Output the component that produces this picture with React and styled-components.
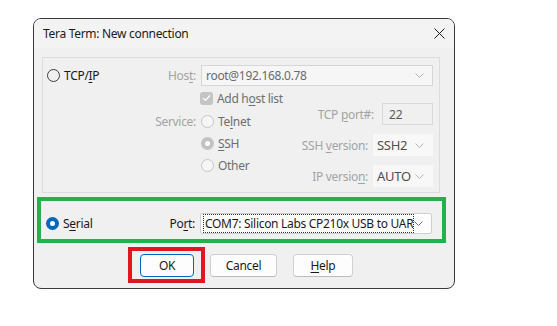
import React from "react";
import styled, { createGlobalStyle, css } from "styled-components";

const Global = createGlobalStyle`
  html, body { margin: 0; padding: 0; background: #ffffff; }
  body { font-family: "Noto Sans", "Open Sans", sans-serif; font-size: 12px; color: #1a1a1a; }
`;

const Page = styled.div`
  padding: 18px 0 0 33px;
`;

const Dialog = styled.div`
  box-sizing: border-box;
  width: 422px;
  height: 271px;
  border: 1px solid #3a3a3a;
  border-radius: 8px;
  background: #f0f0f0;
  display: flex;
  flex-direction: column;
  overflow: hidden;
`;

const TitleBar = styled.div`
  height: 29px;
  padding: 0 9px 0 9px;
  display: flex;
  align-items: center;
  justify-content: space-between;
  background: #f3f3f3;
`;

const Title = styled.span`
  font-size: 12px;
  color: #1a1a1a;
  letter-spacing: -0.3px;
`;

const Content = styled.div`
  padding: 9px 0 0 8px;
  display: flex;
  flex-direction: column;
`;

const GroupBox = styled.div`
  box-sizing: border-box;
  width: 398px;
  height: 136px;
  border: 1px solid #dcdcdc;
  padding: 7px 0 0 4px;
  display: grid;
  grid-template-columns: 100px 54px 232px;
  grid-template-rows: 21px 24px 22px 22px 22px 1fr;
`;

const SerialGroup = styled.div`
  position: relative;
  box-sizing: border-box;
  width: 398px;
  height: 40px;
  margin-top: 7px;
  padding: 13px 0 0 4px;
  display: grid;
  grid-template-columns: 100px 54px 232px;
  grid-template-rows: 21px;
  &::after {
    content: "";
    position: absolute;
    top: -3px;
    left: -5px;
    right: -6px;
    bottom: -3px;
    border: 4px solid #22b14c;
    pointer-events: none;
  }
`;

const Cell = styled.div`
  grid-column: ${(p) => p.$col};
  grid-row: ${(p) => p.$row};
  display: flex;
  align-items: center;
  justify-self: ${(p) => p.$justify || "start"};
  align-self: ${(p) => p.$align || "stretch"};
`;

const Label = styled.span`
  letter-spacing: -0.3px;
  color: ${(p) => (p.$disabled ? "#a3a3a3" : "#1a1a1a")};
  white-space: nowrap;
`;

const FieldLabel = styled(Label)`
  padding-right: ${(p) => p.$gap ?? 5}px;
`;

const Key = styled.u`
  text-decoration: underline;
  text-underline-offset: 2px;
  text-decoration-thickness: 1px;
`;

const Option = styled.label`
  display: flex;
  align-items: center;
  gap: 4px;
  white-space: nowrap;
  letter-spacing: -0.3px;
  color: ${(p) => (p.$disabled ? "#6e6e6e" : "#1a1a1a")};
`;

const RadioCircle = styled.span`
  box-sizing: border-box;
  width: 13px;
  height: 13px;
  border-radius: 50%;
  flex: none;
  display: flex;
  align-items: center;
  justify-content: center;
  ${(p) =>
    p.$checked
      ? css`
          background: ${p.$disabled ? "#c2c2c2" : "#0067c0"};
          border: none;
          &::after {
            content: "";
            width: 5px;
            height: 5px;
            border-radius: 50%;
            background: #ffffff;
          }
        `
      : css`
          background: ${p.$disabled ? "#f6f6f6" : "transparent"};
          border: 1px solid ${p.$disabled ? "#c6c6c6" : "#3d3d3d"};
        `}
`;

const CheckBox = styled.span`
  box-sizing: border-box;
  width: 13px;
  height: 13px;
  border-radius: 3px;
  background: #c4c4c4;
  flex: none;
  display: flex;
  align-items: center;
  justify-content: center;
  margin-left: -1px;
`;

const Combo = styled.div`
  box-sizing: border-box;
  width: ${(p) => p.$w}px;
  height: ${(p) => p.$h || 21}px;
  display: flex;
  align-items: center;
  justify-content: space-between;
  padding: 0 8px 0 ${(p) => p.$pl ?? 4}px;
  background: ${(p) => p.$bg};
  border: 1px solid ${(p) => p.$border};
  border-radius: ${(p) => p.$radius ?? 0}px;
  color: ${(p) => p.$color || "#5c5c5c"};
  font-size: ${(p) => p.$fs || 12}px;
  letter-spacing: -0.3px;
  overflow: hidden;
  white-space: nowrap;
`;

const InputBox = styled.div`
  box-sizing: border-box;
  width: 51px;
  height: 22px;
  border: 1px solid #d9d9d9;
  background: #f0f0f0;
  display: flex;
  align-items: center;
  padding-left: 6px;
  color: #5c5c5c;
  font-size: 12px;
`;

const FieldsColumn = styled.div`
  grid-column: 3;
  grid-row: 2 / 7;
  justify-self: end;
  align-self: start;
  padding-top: 17px;
  display: flex;
  flex-direction: column;
  align-items: flex-end;
  gap: 9px;
`;

const FieldRow = styled.div`
  height: 22px;
  display: flex;
  align-items: center;
`;

const FocusText = styled.span`
  box-sizing: border-box;
  width: 214px;
  height: 19px;
  border: 1px dotted #333;
  overflow: hidden;
  white-space: nowrap;
  display: flex;
  align-items: center;
  padding-left: 1px;
  color: #1a1a1a;
  margin-left: -2px;
`;

const ButtonRow = styled.div`
  margin-top: 14px;
  padding-left: 98px;
  display: flex;
  gap: 16px;
`;

const Button = styled.button`
  box-sizing: border-box;
  width: ${(p) => p.$w}px;
  height: 23px;
  font-family: inherit;
  font-size: 12px;
  letter-spacing: -0.3px;
  color: #1a1a1a;
  background: #fdfdfd;
  border: 1px solid ${(p) => (p.$primary ? "#0067c0" : "#d0d0d0")};
  border-bottom-color: ${(p) => (p.$primary ? "#0067c0" : "#bcbcbc")};
  border-radius: 4px;
  padding: 0;
  display: flex;
  align-items: center;
  justify-content: center;
`;

const Highlight = styled.div`
  position: relative;
  display: flex;
  &::after {
    content: "";
    position: absolute;
    top: -7px;
    left: -12px;
    right: -11px;
    bottom: -6px;
    border: 4px solid #e2161f;
    pointer-events: none;
  }
`;

const Chevron = ({ color }) => (
  <svg width="9" height="5" viewBox="0 0 9 5" style={{ flex: "none" }}>
    <polyline points="0.5,0.5 4.5,4.5 8.5,0.5" fill="none" stroke={color} strokeWidth="1" />
  </svg>
);

const CloseIcon = () => (
  <svg width="11" height="11" viewBox="0 0 11 11">
    <path d="M0.5 0.5 L10.5 10.5 M10.5 0.5 L0.5 10.5" stroke="#1b1b1b" strokeWidth="1" fill="none" />
  </svg>
);

const Check = () => (
  <svg width="9" height="8" viewBox="0 0 9 8">
    <polyline points="1,4 3.5,6.5 8,1.5" fill="none" stroke="#ffffff" strokeWidth="1.2" />
  </svg>
);

export default function App() {
  return (
    <>
      <Global />
      <Page>
        <Dialog>
          <TitleBar>
            <Title>Tera Term: New connection</Title>
            <CloseIcon />
          </TitleBar>
          <Content>
            <GroupBox>
              <Cell $col={1} $row={1}>
                <Option>
                  <RadioCircle />
                  <span>
                    TCP/<Key>I</Key>P
                  </span>
                </Option>
              </Cell>
              <Cell $col={2} $row={1} $justify="end">
                <FieldLabel $disabled>
                  Hos<Key>t</Key>:
                </FieldLabel>
              </Cell>
              <Cell $col={3} $row={1}>
                <Combo $w={232} $bg="#f6f6f6" $border="#d6d6d6" $color="#6a6a6a">
                  <span>root@192.168.0.78</span>
                  <Chevron color="#b5b5b5" />
                </Combo>
              </Cell>
              <Cell $col={3} $row={2}>
                <Option $disabled>
                  <CheckBox>
                    <Check />
                  </CheckBox>
                  <span>
                    Add h<Key>o</Key>st list
                  </span>
                </Option>
              </Cell>
              <Cell $col={2} $row={3} $justify="end">
                <FieldLabel $disabled>Service:</FieldLabel>
              </Cell>
              <Cell $col={3} $row={3}>
                <Option $disabled>
                  <RadioCircle $disabled />
                  <span>
                    Te<Key>l</Key>net
                  </span>
                </Option>
              </Cell>
              <Cell $col={3} $row={4}>
                <Option $disabled>
                  <RadioCircle $disabled $checked />
                  <span>
                    <Key>S</Key>SH
                  </span>
                </Option>
              </Cell>
              <Cell $col={3} $row={5}>
                <Option $disabled>
                  <RadioCircle $disabled />
                  <span>Other</span>
                </Option>
              </Cell>
              <FieldsColumn>
                <FieldRow>
                  <FieldLabel $disabled $gap={8}>
                    TCP <Key>p</Key>ort#:
                  </FieldLabel>
                  <InputBox>22</InputBox>
                </FieldRow>
                <FieldRow>
                  <FieldLabel $disabled>
                    SSH <Key>v</Key>ersion:
                  </FieldLabel>
                  <Combo $w={60} $h={22} $bg="#f8f8f8" $border="#f8f8f8" $pl={3} $fs={13} $color="#4f4f4f">
                    <span>SSH2</span>
                    <Chevron color="#b5b5b5" />
                  </Combo>
                </FieldRow>
                <FieldRow>
                  <FieldLabel $disabled>
                    IP versio<Key>n</Key>:
                  </FieldLabel>
                  <Combo $w={60} $h={22} $bg="#f8f8f8" $border="#f8f8f8" $pl={3} $fs={13} $color="#4f4f4f">
                    <span>AUTO</span>
                    <Chevron color="#b5b5b5" />
                  </Combo>
                </FieldRow>
              </FieldsColumn>
            </GroupBox>
            <SerialGroup>
              <Cell $col={1} $row={1}>
                <Option>
                  <RadioCircle $checked />
                  <span>
                    S<Key>e</Key>rial
                  </span>
                </Option>
              </Cell>
              <Cell $col={2} $row={1} $justify="end">
                <FieldLabel>
                  Po<Key>r</Key>t:
                </FieldLabel>
              </Cell>
              <Cell $col={3} $row={1}>
                <Combo $w={232} $bg="#ffffff" $border="#cfcfcf" $radius={2} $color="#1a1a1a">
                  <FocusText>COM7: Silicon Labs CP210x USB to UAR</FocusText>
                  <Chevron color="#6a6a6a" />
                </Combo>
              </Cell>
            </SerialGroup>
            <ButtonRow>
              <Highlight>
                <Button $w={54} $primary>
                  OK
                </Button>
              </Highlight>
              <Button $w={67}>Cancel</Button>
              <Button $w={60}>
                <span>
                  <Key>H</Key>elp
                </span>
              </Button>
            </ButtonRow>
          </Content>
        </Dialog>
      </Page>
    </>
  );
}
